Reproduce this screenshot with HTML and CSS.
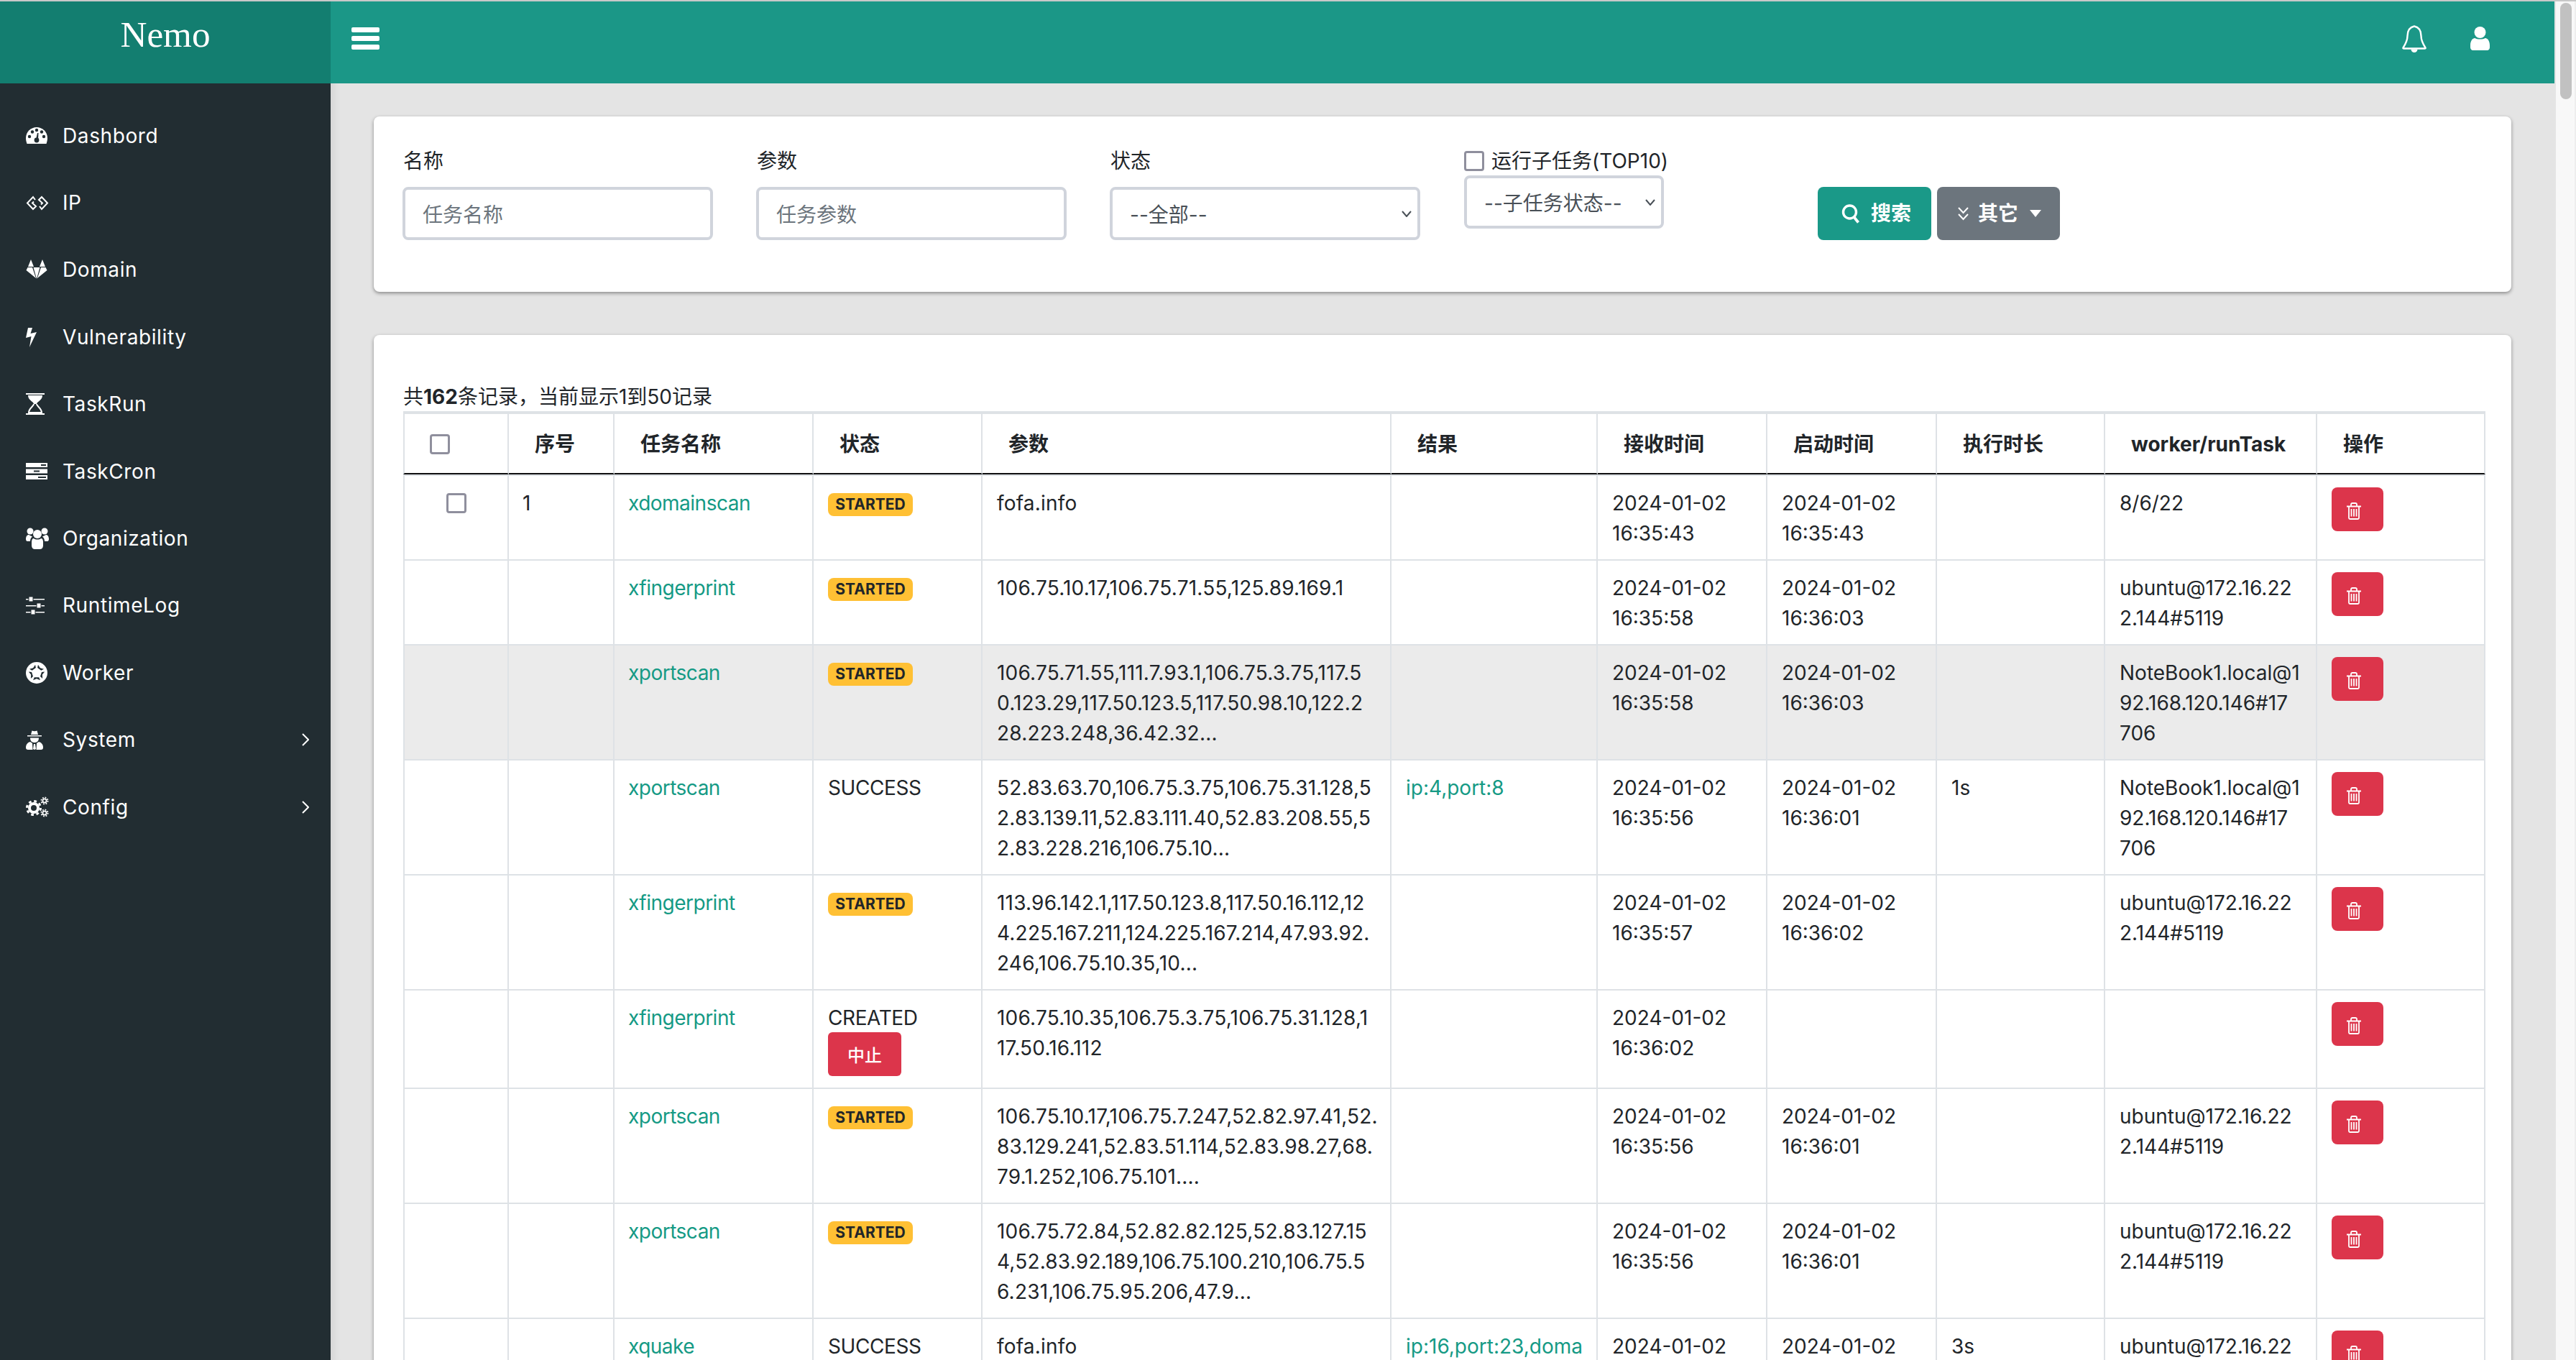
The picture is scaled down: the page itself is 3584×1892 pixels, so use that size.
FILE: index.html
```html
<!DOCTYPE html>
<html lang="zh-CN">
<head>
    <meta charset="UTF-8">
    <title>Nemo</title>
    <link rel="stylesheet" href="styles.css">
</head>
<body>
<svg class="defs" width="0" height="0">
    <symbol id="i-trash" viewBox="0 0 22 24"><path d="M1 5.500H21M4 5.500V21.500Q4 23 5.500 23H16.500Q18 23 18 21.500V5.500M7 5.500V3Q7 1 9 1H13Q15 1 15 3V5.500M7.500 9V19.500M11 9V19.500M14.500 9V19.500" fill="none" stroke="#fff" stroke-width="1.800"/></symbol>
    <symbol id="i-patch" viewBox="0 0 30 30"><path d="M11.800 8.700H18.200L20 4.800 15 6.800 10 4.800z" fill="#222d32"/></symbol>
</svg>
<div class="app">
    <aside class="sidebar">
        <div class="brand">Nemo</div>
        <ul class="menu">
            <li><span class="micon"><svg width="30" height="23" viewBox="0 0 30 23"><path d="M15 0C7 0 0 6.500 0 15c0 3 .7 5.500 1.500 8h27c.8-2.500 1.500-5 1.500-8C30 6.500 23 0 15 0z" fill="#fff"/><g fill="#222d32"><circle cx="5" cy="13" r="2.200"/><circle cx="9" cy="6.500" r="2.200"/><circle cx="15" cy="4" r="2.200"/><circle cx="22" cy="6.500" r="2.200"/><circle cx="25" cy="13" r="2.200"/><circle cx="15" cy="18" r="3.400"/><path d="M14 17 16 8h1.500L17 18z"/></g></svg></span>Dashbord</li>
            <li><span class="micon"><svg width="32" height="23" viewBox="0 0 32 23"><path d="M13 7 10 3 2 11.500 10 20 14 16 9 11.500 11 9.500M19 16 22 20 30 11.500 22 3 18 7 23 11.500 21 13.500" fill="none" stroke="#fff" stroke-width="2"/></svg></span>IP</li>
            <li><span class="micon"><svg width="30" height="28" viewBox="0 0 30 28"><path d="M7 0 11 10H3zM23 0 27 10H19zM10.500 11H19.500L15 27zM2.500 11H9L14 26 .5 15zM27.500 11H21L16 26 29.500 15z" fill="#fff"/></svg></span>Domain</li>
            <li><span class="micon"><svg width="15" height="28" viewBox="0 0 15 28"><path d="M3 1H9L6.500 9 15 7 5 28 7.500 13 0 15z" fill="#fff"/></svg></span>Vulnerability</li>
            <li><span class="micon"><svg width="26" height="30" viewBox="0 0 26 30"><path d="M0 0H26V2H0zM0 28H26V30H0zM3 3H23C23 10 15 12 15 15H11C11 12 3 10 3 3z" fill="#fff"/><path d="M11 15C11 18 4 21 4 27H22C22 21 15 18 15 15" fill="none" stroke="#fff" stroke-width="2"/></svg></span>TaskRun</li>
            <li><span class="micon"><svg width="30" height="23" viewBox="0 0 30 23"><path d="M0 0H30V6H0zM0 8.500H30V14.500H0zM0 17H30V23H0z" fill="#fff"/><path d="M21 2H28V4H21zM11 10.500H19V12.500H11zM17 19H28V21H17z" fill="#222d32"/></svg></span>TaskCron</li>
            <li><span class="micon"><svg width="32" height="30" viewBox="0 0 32 30"><g fill="#fff"><circle cx="16" cy="9" r="6"/><circle cx="6" cy="5" r="4.500"/><circle cx="26" cy="5" r="4.500"/><path d="M0 16C0 12 2 10 4 10 6 11 8 12 9 12.500 7 14 6 16 6 19H2C1 19 0 18 0 16zM32 16C32 12 30 10 28 10 26 11 24 12 23 12.500 25 14 26 16 26 19H30C31 19 32 18 32 16zM8 20C8 17 9 15 11 15 13 17 19 17 21 15 23 15 24 17 24 20V25C24 28 22 30 20 30H12C10 30 8 28 8 25z"/></g></svg></span>Organization</li>
            <li><span class="micon"><svg width="26" height="25" viewBox="0 0 26 25"><path d="M0 3H26V4.500H0zM0 12H26V13.500H0zM0 21H26V22.500H0z" fill="#fff"/><path d="M4 0H10V7H4zM15 9H21V16H15zM7 18H13V25H7z" fill="#fff" stroke="#222d32"/></svg></span>RuntimeLog</li>
            <li><span class="micon"><svg width="30" height="30" viewBox="0 0 30 30"><circle cx="15" cy="15" r="15" fill="#fff"/><use href="#i-patch" width="30" height="30" transform="rotate(36 15 15)"/><use href="#i-patch" width="30" height="30" transform="rotate(108 15 15)"/><use href="#i-patch" width="30" height="30" transform="rotate(180 15 15)"/><use href="#i-patch" width="30" height="30" transform="rotate(252 15 15)"/><use href="#i-patch" width="30" height="30" transform="rotate(324 15 15)"/></svg></span>Worker</li>
            <li><span class="micon"><svg width="24" height="27" viewBox="0 0 24 27"><path d="M7 6 8.500.5Q12 2 15.500.5L17 6zM2 7H22V8.500H2zM6 10.500H18C18 15 15.500 17 12 17 8.500 17 6 15 6 10.500zM0 24C0 20 2 17 6 16L9 18 9.500 27H14.500L15 18 18 16C22 17 24 20 24 24 24 26 23 27 21 27H3C1 27 0 26 0 24zM11 19H13L14 26 12 27 10 26z" fill="#fff"/></svg></span>System<svg class="arrow" width="10" height="18" viewBox="0 0 10 18"><path d="M1 1 9 9 1 17" fill="none" stroke="#fff" stroke-width="2"/></svg></li>
            <li><span class="micon"><svg width="32" height="29" viewBox="0 0 32 29"><g fill="none" stroke="#fff"><circle cx="11" cy="16" r="6" stroke-width="4"/><circle cx="11" cy="16" r="9.500" stroke-width="3" stroke-dasharray="3.700 3.760"/><circle cx="26" cy="6" r="2.600" stroke-width="1.800"/><circle cx="26" cy="6" r="4.600" stroke-width="1.800" stroke-dasharray="1.800 1.810"/><circle cx="26" cy="23" r="2.600" stroke-width="1.800"/><circle cx="26" cy="23" r="4.600" stroke-width="1.800" stroke-dasharray="1.800 1.810"/></g></svg></span>Config<svg class="arrow" width="10" height="18" viewBox="0 0 10 18"><path d="M1 1 9 9 1 17" fill="none" stroke="#fff" stroke-width="2"/></svg></li>
        </ul>
    </aside>

    <div class="page">
        <header class="topbar">
            <div class="burger"><span></span><span></span><span></span></div>
            <svg class="bell" width="34" height="38" viewBox="0 0 34 38"><path d="M17 1.500C10 3 7.500 8 7.500 15 7.500 21 5 26 1.500 31.500Q1 32.500 2.500 32.500H31.500Q33 32.500 32.500 31.500C29 26 26.500 21 26.500 15 26.500 8 24 3 17 1.500z" fill="none" stroke="#fff" stroke-width="2.400"/><path d="M12.500 33.500A4.500 4.500 0 0 0 21.500 33.500z" fill="#fff"/></svg>
            <svg class="user" width="27" height="33" viewBox="0 0 27 33"><circle cx="13.500" cy="8" r="8" fill="#fff"/><path d="M0 26C0 20 3 16 6.500 16 9 18 18 18 20.500 16 24 16 27 20 27 26V29C27 31 25.500 33 23.500 33H3.500C1.500 33 0 31 0 29z" fill="#fff"/></svg>
        </header>

        <main class="content">
            <section class="card search-card">
                <div class="field">
                    <label>名称</label>
                    <input class="form-control" type="text" placeholder="任务名称">
                </div>
                <div class="field">
                    <label>参数</label>
                    <input class="form-control" type="text" placeholder="任务参数">
                </div>
                <div class="field">
                    <label>状态</label>
                    <select class="form-control"><option>--全部--</option></select>
                </div>
                <div class="field sub-field">
                    <label class="check-label"><input class="check" type="checkbox">运行子任务(TOP10)</label>
                    <select class="form-control"><option>--子任务状态--</option></select>
                </div>
                <div class="actions">
                    <button class="btn btn-search" type="button"><svg width="26" height="28" viewBox="0 0 26 28"><circle cx="11.500" cy="12" r="9" fill="none" stroke="#fff" stroke-width="3.400"/><path d="M17.500 19 23.500 26.500" stroke="#fff" stroke-width="3.800"/></svg>搜索</button>
                    <button class="btn btn-other" type="button"><svg width="17" height="22" viewBox="0 0 17 22"><path d="M2 3 8.500 10 15 3M2 12 8.500 19 15 12" fill="none" stroke="#fff" stroke-width="2"/></svg>其它<span class="caret"></span></button>
                </div>
            </section>

            <section class="card list-card">
                <div class="summary">共<b>162</b>条记录，当前显示1到50记录</div>
                <table class="task-table">
                    <colgroup>
                        <col class="c-check"><col class="c-no"><col class="c-name"><col class="c-state"><col class="c-args">
                        <col class="c-result"><col class="c-time"><col class="c-time2"><col class="c-dur"><col class="c-worker"><col class="c-op">
                    </colgroup>
                    <thead>
                        <tr>
                            <th><input class="check" type="checkbox"></th>
                            <th>序号</th><th>任务名称</th><th>状态</th><th>参数</th><th>结果</th>
                            <th>接收时间</th><th>启动时间</th><th>执行时长</th><th>worker/runTask</th><th>操作</th>
                        </tr>
                    </thead>
                    <tbody>
                        <tr>
                            <td class="center"><input class="check" type="checkbox"></td><td>1</td>
                            <td><a>xdomainscan</a></td><td><span class="badge">STARTED</span></td>
                            <td>fofa.info</td><td></td>
                            <td>2024-01-02<br>16:35:43</td><td>2024-01-02<br>16:35:43</td><td></td>
                            <td>8/6/22</td><td><button class="btn-del" type="button"><svg width="22" height="24"><use href="#i-trash"/></svg></button></td>
                        </tr>
                        <tr>
                            <td></td><td></td>
                            <td><a>xfingerprint</a></td><td><span class="badge">STARTED</span></td>
                            <td>106.75.10.17,106.75.71.55,125.89.169.1</td><td></td>
                            <td>2024-01-02<br>16:35:58</td><td>2024-01-02<br>16:36:03</td><td></td>
                            <td>ubuntu@172.16.22<br>2.144#5119</td><td><button class="btn-del" type="button"><svg width="22" height="24"><use href="#i-trash"/></svg></button></td>
                        </tr>
                        <tr class="striped">
                            <td></td><td></td>
                            <td><a>xportscan</a></td><td><span class="badge">STARTED</span></td>
                            <td>106.75.71.55,111.7.93.1,106.75.3.75,117.5<br>0.123.29,117.50.123.5,117.50.98.10,122.2<br>28.223.248,36.42.32...</td><td></td>
                            <td>2024-01-02<br>16:35:58</td><td>2024-01-02<br>16:36:03</td><td></td>
                            <td>NoteBook1.local@1<br>92.168.120.146#17<br>706</td><td><button class="btn-del" type="button"><svg width="22" height="24"><use href="#i-trash"/></svg></button></td>
                        </tr>
                        <tr>
                            <td></td><td></td>
                            <td><a>xportscan</a></td><td>SUCCESS</td>
                            <td>52.83.63.70,106.75.3.75,106.75.31.128,5<br>2.83.139.11,52.83.111.40,52.83.208.55,5<br>2.83.228.216,106.75.10...</td><td><a>ip:4,port:8</a></td>
                            <td>2024-01-02<br>16:35:56</td><td>2024-01-02<br>16:36:01</td><td>1s</td>
                            <td>NoteBook1.local@1<br>92.168.120.146#17<br>706</td><td><button class="btn-del" type="button"><svg width="22" height="24"><use href="#i-trash"/></svg></button></td>
                        </tr>
                        <tr>
                            <td></td><td></td>
                            <td><a>xfingerprint</a></td><td><span class="badge">STARTED</span></td>
                            <td>113.96.142.1,117.50.123.8,117.50.16.112,12<br>4.225.167.211,124.225.167.214,47.93.92.<br>246,106.75.10.35,10...</td><td></td>
                            <td>2024-01-02<br>16:35:57</td><td>2024-01-02<br>16:36:02</td><td></td>
                            <td>ubuntu@172.16.22<br>2.144#5119</td><td><button class="btn-del" type="button"><svg width="22" height="24"><use href="#i-trash"/></svg></button></td>
                        </tr>
                        <tr>
                            <td></td><td></td>
                            <td><a>xfingerprint</a></td><td>CREATED<button class="btn-stop" type="button">中止</button></td>
                            <td>106.75.10.35,106.75.3.75,106.75.31.128,1<br>17.50.16.112</td><td></td>
                            <td>2024-01-02<br>16:36:02</td><td></td><td></td>
                            <td></td><td><button class="btn-del" type="button"><svg width="22" height="24"><use href="#i-trash"/></svg></button></td>
                        </tr>
                        <tr>
                            <td></td><td></td>
                            <td><a>xportscan</a></td><td><span class="badge">STARTED</span></td>
                            <td>106.75.10.17,106.75.7.247,52.82.97.41,52.<br>83.129.241,52.83.51.114,52.83.98.27,68.<br>79.1.252,106.75.101....</td><td></td>
                            <td>2024-01-02<br>16:35:56</td><td>2024-01-02<br>16:36:01</td><td></td>
                            <td>ubuntu@172.16.22<br>2.144#5119</td><td><button class="btn-del" type="button"><svg width="22" height="24"><use href="#i-trash"/></svg></button></td>
                        </tr>
                        <tr>
                            <td></td><td></td>
                            <td><a>xportscan</a></td><td><span class="badge">STARTED</span></td>
                            <td>106.75.72.84,52.82.82.125,52.83.127.15<br>4,52.83.92.189,106.75.100.210,106.75.5<br>6.231,106.75.95.206,47.9...</td><td></td>
                            <td>2024-01-02<br>16:35:56</td><td>2024-01-02<br>16:36:01</td><td></td>
                            <td>ubuntu@172.16.22<br>2.144#5119</td><td><button class="btn-del" type="button"><svg width="22" height="24"><use href="#i-trash"/></svg></button></td>
                        </tr>
                        <tr>
                            <td></td><td></td>
                            <td><a>xquake</a></td><td>SUCCESS</td>
                            <td>fofa.info</td><td><a>ip:16,port:23,doma</a></td>
                            <td>2024-01-02</td><td>2024-01-02</td><td>3s</td>
                            <td>ubuntu@172.16.22</td><td><button class="btn-del" type="button"><svg width="22" height="24"><use href="#i-trash"/></svg></button></td>
                        </tr>
                    </tbody>
                </table>
            </section>
        </main>
    </div>

    <div class="scrollbar"><div class="thumb"></div></div>
</div>
</body>
</html>
```

FILE: styles.css
```css
* {
	box-sizing: border-box;
}

html, body {
	height: 100%;
}

body {
	margin: 0;
	overflow: hidden;
	background-color: #c8c8c8;
	padding-top: 2px;
	color: #212529;
	font-family: Inter, "Noto Sans CJK SC", sans-serif;
	font-size: 28px;
	line-height: 42px;
}

.defs {
	display: block;
}

.app {
	display: flex;
	height: 100%;
}

/* sidebar */
.sidebar {
	width: 460px;
	flex: none;
	background-color: #222d32;
	color: #fff;
}

.brand {
	height: 114px;
	padding-top: 16px;
	background-color: #137e70;
	font-family: "Liberation Serif", serif;
	font-size: 51.2px;
	line-height: 60px;
	text-align: center;
}

.menu {
	list-style-type: none;
	margin: 0;
	padding: 26px 0 0 36px;
	letter-spacing: 0.6px;
}

.menu li {
	display: flex;
	align-items: center;
	height: 93.4px;
}

.micon {
	display: flex;
	align-items: center;
	width: 51px;
	flex: none;
}

.arrow {
	margin-left: auto;
	margin-right: 30px;
}

/* top bar */
.page {
	flex: 1;
	min-width: 0;
	background-color: #e4e4e4;
	box-shadow: inset 16px 0 12px -12px rgba(0, 0, 0, 0.08);
}

.topbar {
	display: flex;
	align-items: center;
	height: 114px;
	padding-left: 29px;
	margin-right: 2px;
	background-color: #1b9787;
}

.burger {
	width: 39px;
	margin-top: -12px;
}

.burger span {
	display: block;
	height: 7px;
	margin-bottom: 5px;
	border-radius: 2px;
	background-color: #fff;
}

.burger span:last-child {
	margin-bottom: 0;
}

.bell {
	margin-left: auto;
	margin-top: -11px;
}

.user {
	margin-left: 61px;
	margin-right: 90px;
	margin-top: -11px;
}

/* cards */
.content {
	padding: 46px 62px 0 60px;
}

.card {
	background-color: #fff;
	border-radius: 8px;
	box-shadow: 0 2px 5px rgba(0, 0, 0, 0.4);
}

.search-card {
	display: flex;
	height: 244px;
	padding: 41px 40px 0;
	gap: 60px;
}

.field {
	width: 432px;
	flex: none;
}

.field label {
	display: block;
	margin-bottom: 15px;
	padding-left: 1px;
}

.sub-field {
	width: 278px;
	margin-left: 1px;
}

.field .check-label {
	display: flex;
	align-items: center;
	margin-bottom: -1px;
	padding-left: 0;
	white-space: nowrap;
}

.check-label .check {
	margin-right: 10px;
}

.form-control {
	display: block;
	width: 100%;
	height: 74px;
	padding: 4px 24px 0;
	border: 4px solid #d0d4dc;
	border-radius: 8px;
	background-color: #fff;
	color: #495057;
	font: inherit;
	appearance: none;
}

.form-control::placeholder {
	color: #6c757d;
}

select.form-control {
	background-image: url("data:image/svg+xml,%3Csvg xmlns='http://www.w3.org/2000/svg' width='14' height='9'%3E%3Cpath d='M1 1l6 7 6-7' fill='none' stroke='%23495057' stroke-width='2'/%3E%3C/svg%3E");
	background-repeat: no-repeat;
	background-position: right 8px center;
}

.check {
	appearance: none;
	display: inline-block;
	width: 28px;
	height: 28px;
	margin: 0;
	flex: none;
	border: 3px solid #8f8f9d;
	border-radius: 4px;
	background-color: #fff;
	vertical-align: top;
}

.actions {
	display: flex;
	gap: 8px;
	margin-left: 154px;
	margin-top: 57px;
}

.btn {
	display: flex;
	align-items: center;
	height: 74px;
	border: 0;
	border-radius: 8px;
	color: #fff;
	font: inherit;
	font-weight: 700;
}

.btn-search {
	width: 158px;
	padding-left: 33px;
	gap: 15px;
	background-color: #1a9988;
}

.btn-other {
	width: 171px;
	padding-left: 28px;
	gap: 12px;
	background-color: #6c757d;
}

.caret {
	width: 0;
	height: 0;
	margin-left: 4px;
	border-top: 10px solid #fff;
	border-left: 8px solid transparent;
	border-right: 8px solid transparent;
}

.list-card {
	margin-top: 60px;
	padding: 64px 36px 0 41px;
	height: 1600px;
}

.summary {
	height: 42px;
	line-height: 45px;
}

/* table */
.task-table {
	width: 2897px;
	table-layout: fixed;
	border-collapse: separate;
	border-spacing: 0;
}

.c-check, .c-no { width: 147px; }
.c-name { width: 277px; }
.c-state { width: 235px; }
.c-args { width: 569px; }
.c-result { width: 287px; }
.c-time, .c-time2 { width: 236px; }
.c-dur { width: 234px; }
.c-worker { width: 295px; }
.c-op { width: 234px; }

.task-table th, .task-table td {
	border-right: 2px solid #dee2e6;
	text-align: left;
	vertical-align: top;
	white-space: nowrap;
}

.task-table th {
	height: 86px;
	padding: 21px 10px 19px 36px;
	border-top: 4px solid #dee2e6;
	border-bottom: 2px solid #111;
	font-weight: 700;
}

.task-table th:first-child {
	padding-left: 35px;
}

.task-table th .check {
	margin-top: 7px;
}

.task-table td {
	padding: 17px 10px 15px 20px;
	border-bottom: 2px solid #dee2e6;
}

.task-table td:nth-child(2), .task-table td:nth-child(3) {
	padding-left: 19px;
}

.task-table td:nth-child(3) a {
	letter-spacing: -0.5px;
}

.task-table td:nth-child(4) {
	letter-spacing: -0.4px;
}

.task-table td:nth-child(5) {
	letter-spacing: 0.2px;
}

.task-table th:first-child, .task-table td:first-child {
	border-left: 2px solid #dee2e6;
}

.task-table tbody tr:first-child td {
	border-top: 2px solid #dee2e6;
}

.task-table td.center {
	padding: 24px 0 0;
	text-align: center;
}

.striped td {
	background-color: #ebebeb;
}

.task-table a {
	color: #159a85;
}

.badge {
	display: inline-block;
	width: 118px;
	height: 32px;
	margin-top: 7px;
	border-radius: 8px;
	background-color: #ffc034;
	font-size: 21px;
	font-weight: 700;
	letter-spacing: 0;
	line-height: 32px;
	text-align: center;
	vertical-align: top;
}

.btn-del {
	display: block;
	width: 72px;
	height: 61px;
	margin: -1px 0 1px;
	padding: 5px 0 0 20px;
	border: 0;
	border-radius: 8px;
	background-color: #dc354b;
	text-align: left;
}

.btn-del svg {
	display: block;
}

.btn-stop {
	display: block;
	width: 102px;
	height: 61px;
	margin: -1px 0 1px;
	padding: 0;
	border: 0;
	border-radius: 6px;
	background-color: #dc354b;
	color: #fff;
	font-family: inherit;
	font-size: 24px;
	font-weight: 500;
}

/* window scrollbar */
.scrollbar {
	width: 28px;
	flex: none;
	padding: 2px 4px 0 6px;
	border-right: 2px solid #eee;
	background-color: #f8f8f8;
}

.thumb {
	width: 16px;
	height: 134px;
	border-radius: 8px;
	background-color: #c1c1c1;
}
```
